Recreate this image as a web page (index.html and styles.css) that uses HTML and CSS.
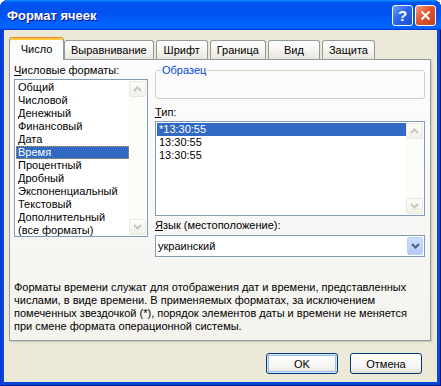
FILE: index.html
```html
<!DOCTYPE html>
<html lang="ru">
<head>
    <meta charset="UTF-8">
    <meta name="viewport" content="width=device-width, initial-scale=1.0">
    <title>Формат ячеек</title>
    <link rel="stylesheet" href="styles.css">
</head>
<body>
    <div class="window">
        <div class="titlebar">
            <span class="title">Формат ячеек</span>
            <div class="controls">
                <button class="ctl ctl-help">?</button>
                <button class="ctl ctl-close">
                    <svg width="11" height="11" viewBox="0 0 11 11"><path d="M1.5 1.5 L9.5 9.5 M9.5 1.5 L1.5 9.5" stroke="#fff" stroke-width="2" fill="none"/></svg>
                </button>
            </div>
        </div>
        <div class="client">
            <!-- вкладки -->
            <div class="tabs">
                <div class="tab tab-active">Число</div>
                <div class="tab">Выравнивание</div>
                <div class="tab">Шрифт</div>
                <div class="tab">Граница</div>
                <div class="tab">Вид</div>
                <div class="tab">Защита</div>
            </div>
            <div class="panel">
                <div class="cols">
                    <div class="col-left">
                        <div class="label label-cat"><u>Ч</u>исловые форматы:</div>
                        <div class="listbox listbox-cat">
                            <ul class="items">
                                <li>Общий</li>
                                <li>Числовой</li>
                                <li>Денежный</li>
                                <li>Финансовый</li>
                                <li>Дата</li>
                                <li class="sel focus">Время</li>
                                <li>Процентный</li>
                                <li>Дробный</li>
                                <li>Экспоненциальный</li>
                                <li>Текстовый</li>
                                <li>Дополнительный</li>
                                <li>(все форматы)</li>
                            </ul>
                            <div class="scrollbar">
                                <div class="sb-btn"><svg width="9" height="6" viewBox="0 0 9 6"><path d="M1 5 L4.5 1.5 L8 5" fill="none" stroke="#C8C6BA" stroke-width="2"/></svg></div>
                                <div class="sb-track"></div>
                                <div class="sb-btn"><svg width="9" height="6" viewBox="0 0 9 6"><path d="M1 1 L4.5 4.5 L8 1" fill="none" stroke="#C8C6BA" stroke-width="2"/></svg></div>
                            </div>
                        </div>
                    </div>
                    <div class="col-right">
                        <fieldset class="sample">
                            <legend>Образец</legend>
                            <div class="sample-body"></div>
                        </fieldset>
                        <div class="label label-type"><u>Т</u>ип:</div>
                        <div class="listbox listbox-type">
                            <ul class="items">
                                <li class="sel">*13:30:55</li>
                                <li>13:30:55</li>
                                <li>13:30:55</li>
                            </ul>
                            <div class="scrollbar">
                                <div class="sb-btn"><svg width="9" height="6" viewBox="0 0 9 6"><path d="M1 5 L4.5 1.5 L8 5" fill="none" stroke="#C8C6BA" stroke-width="2"/></svg></div>
                                <div class="sb-track"></div>
                                <div class="sb-btn"><svg width="9" height="6" viewBox="0 0 9 6"><path d="M1 1 L4.5 4.5 L8 1" fill="none" stroke="#C8C6BA" stroke-width="2"/></svg></div>
                            </div>
                        </div>
                        <div class="label label-lang"><u>Я</u>зык (местоположение):</div>
                        <div class="combo">
                            <span class="combo-text">украинский</span>
                            <div class="combo-btn"><svg width="9" height="6" viewBox="0 0 9 6"><path d="M1 1 L4.5 4.5 L8 1" fill="none" stroke="#4D6185" stroke-width="2"/></svg></div>
                        </div>
                    </div>
                </div>
                <p class="desc">Форматы времени служат для отображения дат и времени, представленных<br>числами, в виде времени. В применяемых форматах, за исключением<br>помеченных звездочкой (*), порядок элементов даты и времени не меняется<br>при смене формата операционной системы.</p>
            </div>
            <div class="buttons">
                <button class="btn btn-default">OK</button>
                <button class="btn">Отмена</button>
            </div>
        </div>
    </div>
</body>
</html>
```

FILE: styles.css
```css
*{margin:0; padding:0; box-sizing:border-box;}
li{list-style:none;}
html,body{height:100%;}
body{
    background:#fff;
    font-family:"Liberation Sans", Arial, sans-serif;
    font-size:11px; color:#000;
}

/* окно */
.window{
    width:441px; height:386px;
    display:flex; flex-direction:column;
    background:#0847D8;
    border-radius:8px 8px 0 0;
    overflow:hidden;
    box-shadow:inset 1px 0 #0831D9, inset -1px 0 #00138C, inset 0 -1px #00138C;
}
.titlebar{
    height:30px; flex:none;
    display:flex; align-items:center; justify-content:space-between;
    padding:0 5px 0 7px;
    background:linear-gradient(180deg,#0997FF,#0053EE 8%,#0050EE 40%,#0066FF 88%,#0066FF 93%,#005BFF 95%,#003DD7 96%,#003DD7);
}
.title{
    color:#fff; font-weight:bold; font-size:13px;
    text-shadow:1px 1px #0F1089;
}
.controls{display:flex; gap:2px;}
.ctl{
    width:21px; height:21px;
    border:1px solid #fff; border-radius:3px;
    display:flex; align-items:center; justify-content:center;
    font-family:"Liberation Sans", Arial, sans-serif;
}
.ctl-help{
    background:linear-gradient(135deg,#6FA0FB,#2C66EC 45%,#1B4FD4);
    color:#fff; font-weight:bold; font-size:15px;
}
.ctl-close{
    background:linear-gradient(135deg,#F19B7A,#E0572D 45%,#C53E1A);
}

.client{
    flex:1;
    margin:0 4px 4px;
    background:#ECE9D8;
    display:flex; flex-direction:column;
}

/* вкладки */
.tabs{
    display:flex; align-items:flex-end;
    margin-top:7px; padding-left:5px;
    gap:2px;
}
.tab{
    height:19px; min-width:52px;
    padding:0 6px;
    border:1px solid #919B9C; border-bottom:0;
    border-radius:3px 3px 0 0;
    background:linear-gradient(#FFFFFF,#F6F5F1 50%,#E7E5DC);
    text-align:center; line-height:18px;
    white-space:nowrap;
}
.tab-active{
    height:23px; min-width:55px;
    margin-bottom:-1px; margin-right:-2px;
    position:relative; z-index:1;
    background:#FCFCFE;
    border-top-color:#E68B2C;
    box-shadow:inset 0 2px #FFC73C;
    line-height:22px;
}
.panel{
    height:282px; flex:none;
    margin:0 6px 0 5px;
    border:1px solid #919B9C;
    background:linear-gradient(#FCFCFE,#F4F3EE);
    padding:4px 5px 7px 4px;
    box-shadow:1px 1px #D0CEBF, 2px 2px #E2DFD0;
    display:flex; flex-direction:column;
}
.cols{display:flex; gap:7px;}
.col-left{width:134px;}
.col-right{width:270px;}
.label{height:13px; line-height:13px; white-space:nowrap;}
.label-cat{margin-bottom:2px;}
.label-type{margin-top:7px; margin-bottom:2px;}
.label-lang{margin-top:3px; margin-bottom:3px;}

/* списки */
.listbox{
    display:flex;
    border:1px solid #7F9DB9;
    background:#fff;
    padding:1px;
    overflow:hidden;
}
.listbox-cat{height:158px;}
.listbox-type{height:95px;}
.items{flex:1; min-width:0;}
.items li{
    height:13px; line-height:13px;
    padding-left:2px;
    white-space:nowrap;
}
.items .sel{background:#316AC5; color:#fff;}
.items .focus{outline:1px dotted #CE953A; outline-offset:-1px;}
.scrollbar{
    width:17px; flex:none;
    display:flex; flex-direction:column;
    background:#FCFCF9;
}
.sb-btn{
    height:16px; flex:none;
    border:1px solid #EAE8DE; border-radius:2px;
    background:linear-gradient(#FCFCFA,#F1F0EA);
    display:flex; align-items:center; justify-content:center;
}
.sb-track{flex:1;}

.sample{
    border:1px solid #D0D0BF; border-radius:3px;
    padding:0 0 0 5px;
    min-width:0;
}
.sample legend{
    color:#0046D5;
    padding:0 1px;
    line-height:13px;
}
.sample-body{height:21px;}

.combo{
    height:22px;
    border:1px solid #7F9DB9;
    background:#fff;
    padding:1px;
    display:flex; align-items:center;
}
.combo-text{flex:1; padding-left:1px;}
.combo-btn{
    width:16px; height:18px;
    border:1px solid #BED0F6; border-radius:2px;
    background:linear-gradient(#CFDFFD,#B4CAF5);
    display:flex; align-items:center; justify-content:center;
}

.desc{margin-top:24px; line-height:13px; white-space:nowrap;}

/* кнопки */
.buttons{
    display:flex; justify-content:flex-end;
    gap:12px;
    margin-top:12px; padding-right:15px;
}
.btn{
    width:72px; height:21px;
    border:1px solid #003C74; border-radius:3px;
    background:linear-gradient(#FFFFFF,#F4F4F0 70%,#E3E0D7);
    font:inherit; color:#000;
}
.btn-default{
    box-shadow:inset 0 0 0 1px #CEE7FF, inset 0 0 0 2px #A0BDEC;
}
```
